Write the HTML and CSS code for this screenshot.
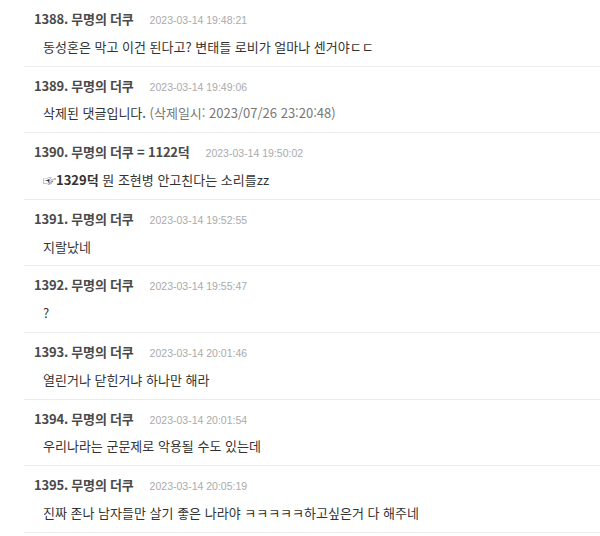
FILE: index.html
```html
<!DOCTYPE html>
<html lang="ko">
<head>
    <meta charset="UTF-8">
    <meta name="viewport" content="width=device-width, initial-scale=1.0">
    <title>댓글</title>
    <link rel="stylesheet" href="styles.css">
</head>
<body>

    <ul class="comment-list">
        <li class="comment">
            <div class="comment-head"><span class="comment-name">1388. 무명의 더쿠</span><span class="comment-date">2023-03-14 19:48:21</span></div>
            <div class="comment-body">동성혼은 막고 이건 된다고? 변태들 로비가 얼마나 센거야ㄷㄷ</div>
        </li>
        <li class="comment">
            <div class="comment-head"><span class="comment-name">1389. 무명의 더쿠</span><span class="comment-date">2023-03-14 19:49:06</span></div>
            <div class="comment-body">삭제된 댓글입니다. <span class="deleted">(삭제일시: 2023/07/26 23:20:48)</span></div>
        </li>
        <li class="comment">
            <div class="comment-head"><span class="comment-name">1390. 무명의 더쿠 = 1122덕</span><span class="comment-date">2023-03-14 19:50:02</span></div>
            <div class="comment-body"><a class="reply-link" href="#">☞1329덕</a> 뭔 조현병 안고친다는 소리를zz</div>
        </li>
        <li class="comment">
            <div class="comment-head"><span class="comment-name">1391. 무명의 더쿠</span><span class="comment-date">2023-03-14 19:52:55</span></div>
            <div class="comment-body">지랄났네</div>
        </li>
        <li class="comment">
            <div class="comment-head"><span class="comment-name">1392. 무명의 더쿠</span><span class="comment-date">2023-03-14 19:55:47</span></div>
            <div class="comment-body">?</div>
        </li>
        <li class="comment">
            <div class="comment-head"><span class="comment-name">1393. 무명의 더쿠</span><span class="comment-date">2023-03-14 20:01:46</span></div>
            <div class="comment-body">열린거나 닫힌거냐 하나만 해라</div>
        </li>
        <li class="comment">
            <div class="comment-head"><span class="comment-name">1394. 무명의 더쿠</span><span class="comment-date">2023-03-14 20:01:54</span></div>
            <div class="comment-body">우리나라는 군문제로 악용될 수도 있는데</div>
        </li>
        <li class="comment">
            <div class="comment-head"><span class="comment-name">1395. 무명의 더쿠</span><span class="comment-date">2023-03-14 20:05:19</span></div>
            <div class="comment-body">진짜 존나 남자들만 살기 좋은 나라야 ㅋㅋㅋㅋㅋ하고싶은거 다 해주네</div>
        </li>
    </ul>

</body>
</html>
```

FILE: styles.css
```css
body {
    margin: 0;
    background-color: #fff;
    font-family: "Noto Sans CJK KR", "Noto Sans", sans-serif;
    color: #333;
}

.comment-list {
    list-style: none;
    margin: 0 0 0 24px;
    padding: 0;
}

.comment {
    padding: 10px 0 8.8px 10px;
    border-bottom: 1px solid #ececec;
}

.comment-head {
    display: flex;
    align-items: baseline;
    gap: 16px;
    height: 18px;
    line-height: 18px;
}

.comment-name {
    font-size: 13px;
    font-weight: bold;
    color: #4a4a4a;
    letter-spacing: -0.2px;
}

.comment-date {
    font-family: "Liberation Sans", Arial, sans-serif;
    font-size: 10.5px;
    color: #aaa;
}

.comment-body {
    margin-top: 8.8px;
    padding-left: 9px;
    height: 20px;
    line-height: 20px;
    font-size: 13px;
    color: #333;
}

.deleted {
    color: #777;
}

.reply-link {
    font-weight: bold;
    color: #333;
    text-decoration: none;
}
```
